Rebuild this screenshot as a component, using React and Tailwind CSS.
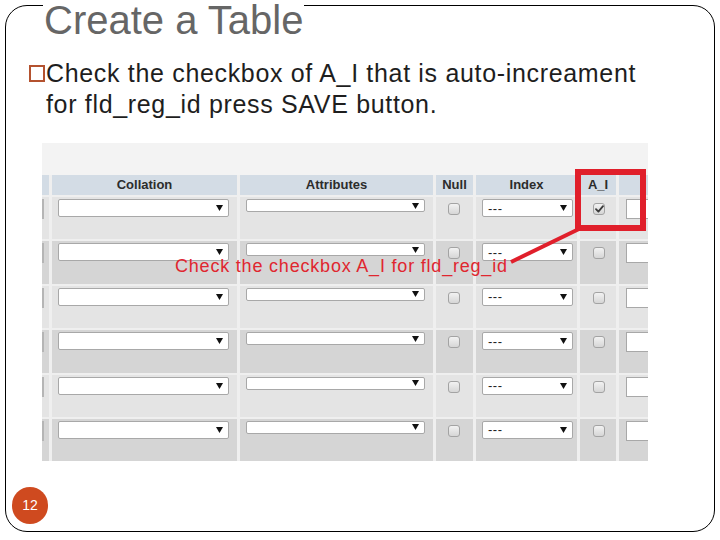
import React from "react";

function Arrow({ className = "" }) {
  return (
    <svg width="7" height="6" viewBox="0 0 7 6" className={className}>
      <polygon points="0,0 7,0 3.5,6" fill="#111" />
    </svg>
  );
}

function Check({ checked }) {
  return (
    <div className="w-[12px] h-[12px] rounded-[3px] border border-[#a3a3a3] bg-linear-to-b from-[#f2f2f2] to-[#d6d6d6] flex items-center justify-center">
      {checked && (
        <svg width="9" height="8" viewBox="0 0 9 8">
          <path d="M1 4.2 L3.4 6.6 L8 1.2" stroke="#3a3a3a" strokeWidth="1.8" fill="none" strokeLinecap="round" strokeLinejoin="round" />
        </svg>
      )}
    </div>
  );
}

function Row({ dark, checked }) {
  const bg = dark ? "bg-[#d5d5d5]" : "bg-[#e4e4e4]";
  return (
    <>
      <div className={`${bg} pt-[2px]`}>
        <div className="w-[2px] h-[20px] bg-[#b5b5b5]" />
      </div>
      <div className={`${bg} pt-[2px] pl-[6px]`}>
        <div className="w-[171px] h-[18px] bg-white border border-[#a8a8a8] rounded-[2px] flex items-center justify-end pr-[5px]">
          <Arrow />
        </div>
      </div>
      <div className={`${bg} pt-[2px] pl-[6px]`}>
        <div className="w-[179px] h-[13px] bg-white border border-[#a8a8a8] rounded-[2px] flex items-center justify-end pr-[5px]">
          <Arrow />
        </div>
      </div>
      <div className={`${bg} pt-[6px] pl-[12px]`}>
        <Check />
      </div>
      <div className={`${bg} pt-[2px] pl-[6px]`}>
        <div className="w-[91px] h-[18px] bg-white border border-[#a8a8a8] rounded-[2px] flex items-center justify-between pl-[5px] pr-[5px]">
          <span className="text-[13px] leading-none text-[#222] tracking-[0.5px]">---</span>
          <Arrow />
        </div>
      </div>
      <div className={`${bg} pt-[6px] pl-[13px]`}>
        <Check checked={checked} />
      </div>
      <div className={`${bg} pt-[2px] pl-[7px] overflow-hidden`}>
        <div className="w-[30px] h-[20px] bg-white border border-r-0 border-[#a8a8a8]" />
      </div>
    </>
  );
}

export default function App() {
  const headers = ["", "Collation", "Attributes", "Null", "Index", "A_I", ""];
  return (
    <div className="relative w-[720px] h-[540px] bg-white overflow-hidden font-['Liberation_Sans',Arial,sans-serif]">
      <div className="ml-[5px] mt-[5px] w-[710px] h-[527px] border border-black rounded-[22px]">
        <div className="-mt-[6px] pl-[37px] h-[40px]">
          <span className="inline-block bg-white px-[1px] text-[40px] leading-[40px] text-[#666666]">
            Create a Table
          </span>
        </div>

        <div className="mt-[18px] ml-[23px] flex">
          <div className="mt-[7px] w-[16px] h-[17px] border-2 border-[#b4522f] shrink-0" />
          <div className="ml-[1px] text-[25px] leading-[31px] tracking-[0.67px] text-[#1e1e1e] whitespace-nowrap">
            Check the checkbox of A_I that is auto-increament
            <br />
            for fld_reg_id press SAVE button.
          </div>
        </div>

        <div className="mt-[23px] ml-[36px] w-[606px]">
          <div className="h-[32px] bg-[#f3f3f3]" />
          <div className="grid grid-cols-[7px_185px_193px_37px_101px_36px_29px] grid-rows-[20px_repeat(6,42.4px)] gap-x-[3px] gap-y-[2px] bg-[#efefef]">
            {headers.map((h, i) => (
              <div
                key={i}
                className="bg-[#d3dce5] flex items-center justify-center text-[13px] font-bold text-[#2c2c2c]"
              >
                {h}
              </div>
            ))}
            <Row checked />
            <Row dark />
            <Row />
            <Row dark />
            <Row />
            <Row dark />
          </div>
        </div>

        <div className="mt-[26px] ml-[6px] w-[36px] h-[37px] rounded-full bg-[#cf4a1f] flex items-center justify-center text-[14px] text-white">
          12
        </div>
      </div>

      <div className="absolute left-[175px] top-[257px] text-[18px] leading-[18px] tracking-[0.8px] text-[#e0262f] whitespace-nowrap">
        Check the checkbox A_I for fld_reg_id
      </div>

      <svg className="absolute left-0 top-0 pointer-events-none" width="720" height="540">
        <rect x="578" y="172" width="65" height="56" fill="none" stroke="#e01f2b" strokeWidth="6" />
        <line x1="511" y1="262" x2="581" y2="228" stroke="#e01f2b" strokeWidth="4" />
      </svg>
    </div>
  );
}
